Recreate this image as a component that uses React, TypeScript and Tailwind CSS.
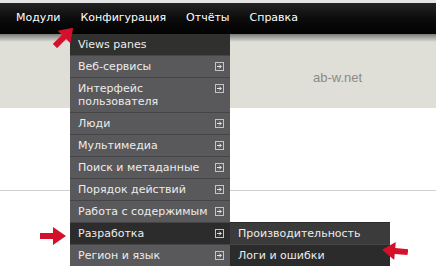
const navLinks = ["Модули", "Конфигурация", "Отчёты", "Справка"];

const menuItems = [
  { label: "Веб-сервисы" },
  { label: "Интерфейс пользователя", wrap: true },
  { label: "Люди" },
  { label: "Мультимедиа" },
  { label: "Поиск и метаданные" },
  { label: "Порядок действий" },
  { label: "Работа с содержимым" },
  { label: "Разработка", active: true },
  { label: "Регион и язык" },
];

const font = { fontFamily: '"DejaVu Sans", Verdana, sans-serif' };

const SubIcon = () => (
  <svg width="9" height="9" viewBox="0 0 9 9" className="shrink-0 mt-[2px]">
    <rect x="0.5" y="0.5" width="8" height="8" fill="none" stroke="#c4c4c4" />
    <path d="M2 4.5h4.2M4.3 2.6l1.9 1.9-1.9 1.9" fill="none" stroke="#e6e6e6" strokeWidth="1" />
  </svg>
);

const RedArrow = ({ rotate }: { rotate: number }) => (
  <svg width="26" height="18" viewBox="0 0 26 18" style={{ transform: `rotate(${rotate}deg)` }}>
    <path d="M0 6h13V0l13 9-13 9v-6H0z" fill="#d3112b" />
  </svg>
);

const App = () => {
  return (
    <div className="relative w-[436px] h-[267px] overflow-hidden bg-white" style={font}>
      {/* top strip */}
      <div className="h-[3px] bg-[#e4e4e4]" />

      {/* nav bar */}
      <div className="h-[31px] flex items-center pl-[16px] gap-[20px] bg-gradient-to-b from-[#232323] via-[#0c0c0c] to-[#030303] text-white text-[11px]">
        {navLinks.map((l) => (
          <span key={l}>{l}</span>
        ))}
      </div>

      {/* header area */}
      <div className="h-[74px] bg-[#dfdfd8]">
        <div className="h-[8px] bg-gradient-to-b from-[#7a7a78] to-[#dfdfd8]" />
        <div className="pl-[313px] pt-[26px] text-[13px] text-[#8a8a86]" style={{ fontFamily: '"Liberation Sans", Arial, sans-serif' }}>
          ab-w.net
        </div>
      </div>

      {/* content */}
      <div className="h-[82px]" />
      <div className="h-px bg-[#cfcfcf]" />

      {/* dropdown */}
      <div className="absolute left-[70px] top-[34px] w-[160px] text-[11px] text-[#ececec]">
        <div className="h-[21px] leading-[21px] pl-[8px] bg-[#30302e]">Views panes</div>
        {menuItems.map((m) => (
          <div
            key={m.label}
            className={`flex justify-between pl-[8px] pr-[6px] pt-[4px] pb-[4px] leading-[13px] border-t border-[#454547] ${
              m.active ? "bg-[#2c2c2c]" : "bg-[#59595b]"
            }`}
          >
            <span className={m.wrap ? "w-[110px]" : ""}>{m.label}</span>
            <SubIcon />
          </div>
        ))}
      </div>

      {/* submenu */}
      <div className="absolute left-[230px] top-[222px] w-[160px] text-[11px] text-[#ececec]">
        <div className="pl-[8px] pt-[4px] pb-[4px] leading-[13px] border-t border-[#2a2a2a] bg-[#3b3b3b]">Производительность</div>
        <div className="pl-[8px] pt-[4px] pb-[4px] leading-[13px] border-t border-[#454545] bg-[#2b2b2b]">Логи и ошибки</div>
      </div>

      {/* red pointers */}
      <div className="absolute left-[51px] top-[28px]">
        <RedArrow rotate={-45} />
      </div>
      <div className="absolute left-[40px] top-[227px]">
        <RedArrow rotate={0} />
      </div>
      <div className="absolute left-[382px] top-[242px]">
        <RedArrow rotate={185} />
      </div>
    </div>
  );
};

export default App;
